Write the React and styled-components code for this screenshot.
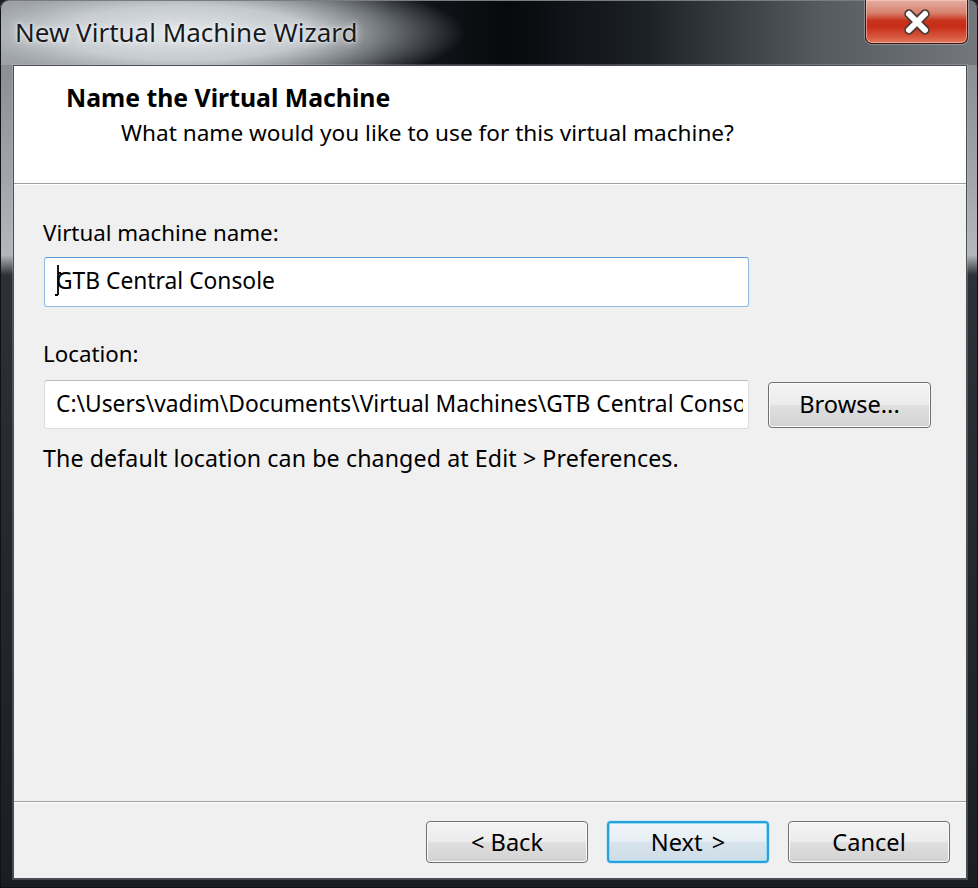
import React from "react";
import styled, { createGlobalStyle } from "styled-components";

const GlobalStyle = createGlobalStyle`
  html, body { margin: 0; padding: 0; background: #1b1f24; }
  * { box-sizing: border-box; }
`;

const FONT = `"Noto Sans", "Open Sans", "DejaVu Sans", sans-serif`;

const Window = styled.div`
  width: 978px;
  height: 888px;
  display: flex;
  flex-direction: column;
  padding: 0 11px 9px 13px;
  border-radius: 9px 9px 0 0;
  overflow: hidden;
  font-family: ${FONT};
  background:
    radial-gradient(ellipse 280px 60px at 185px 33px, rgba(228,232,236,0.97) 0%, rgba(205,210,215,0.92) 45%, rgba(165,170,175,0.55) 75%, rgba(150,155,160,0) 100%) 0 0 / 100% 65px no-repeat,
    linear-gradient(to right, #9a9ea2 0%, #6b7075 22%, #15191e 40%, #07090c 52%, #1c2126 66%, #565b60 84%, #74787c 100%) 0 0 / 100% 65px no-repeat,
    linear-gradient(to bottom, #7d8287 0%, #a2a6aa 180px, #b4b8bc 255px, #2c3137 275px, #1a1e23 100%);
  box-shadow: inset 0 1px 0 rgba(255,255,255,0.45), inset 0 0 0 1px #101215;
`;

const TitleBar = styled.div`
  height: 65px;
  flex: none;
  display: flex;
  align-items: flex-start;
  margin-right: -11px;
  padding-left: 2px;
`;

const Title = styled.div`
  align-self: center;
  margin-top: -1px;
  font-size: 26px;
  color: #161a1e;
  text-shadow: 0 0 8px rgba(255,255,255,0.9), 0 0 3px rgba(255,255,255,0.8);
`;

const CloseButton = styled.div`
  margin-left: auto;
  margin-right: 10px;
  width: 103px;
  height: 44px;
  display: flex;
  align-items: center;
  justify-content: center;
  border: 1px solid #3b1710;
  border-top: none;
  border-radius: 0 0 7px 7px;
  background: linear-gradient(to bottom, #e4ada1 0%, #d8826f 30%, #c8321c 48%, #c72d17 62%, #d6563d 85%, #e07a5e 100%);
  box-shadow: inset 0 0 0 1px rgba(255,210,200,0.55), 0 0 0 1px rgba(255,255,255,0.25);
`;

const Client = styled.div`
  flex: 1;
  display: flex;
  flex-direction: column;
  background: #f0f0f0;
  border: 1px solid #4a4f55;
  box-shadow: 0 0 0 1px rgba(200,205,210,0.25);
`;

const Header = styled.div`
  height: 118px;
  flex: none;
  background: #fff;
  padding: 16px 0 0 52px;
  border-bottom: 1px solid #a0a0a0;
  box-shadow: 0 1px 0 #ffffff;
`;

const HeaderTitle = styled.div`
  font-size: 24.8px;
  line-height: 30px;
  font-weight: 700;
  color: #000;
`;

const HeaderSub = styled.div`
  margin-top: 6px;
  padding-left: 55px;
  font-size: 22.6px;
  line-height: 30px;
  color: #000;
`;

const Body = styled.div`
  flex: 1;
  display: flex;
  flex-direction: column;
  align-items: flex-start;
  padding: 34px 0 0 29px;
`;

const Label = styled.div`
  font-size: 22.3px;
  line-height: 30px;
  color: #000;
  margin-top: ${(p) => p.$top || 0}px;
`;

const FieldRow = styled.div`
  display: flex;
  align-items: center;
  gap: 19px;
  margin-top: ${(p) => p.$top || 0}px;
`;

const Field = styled.div`
  position: relative;
  width: 705px;
  height: ${(p) => (p.$focused ? 50 : 49)}px;
  margin-left: 1px;
  padding: 0 5px 3px 11px;
  display: flex;
  align-items: center;
  overflow: hidden;
  white-space: nowrap;
  background: #fff;
  border: 1px solid ${(p) => (p.$focused ? "#8fbbe2" : "#dcdcdc")};
  border-top-color: ${(p) => (p.$focused ? "#5d9ad2" : "#bcbcbc")};
  border-radius: 3px;
  font-size: 22.8px;
  color: #000;
`;

const FieldText = styled.span`
  display: block;
  overflow: hidden;
  width: 100%;
`;

const IBeam = styled.svg`
  position: absolute;
  left: 8px;
  top: 5px;
`;

const Button = styled.div`
  width: ${(p) => p.$w || 162}px;
  height: ${(p) => p.$h || 42}px;
  display: flex;
  align-items: center;
  justify-content: center;
  padding-bottom: 1px;
  font-size: 23.6px;
  word-spacing: ${(p) => p.$ws || 0}px;
  color: #000;
  border-radius: 4px;
  border: ${(p) => (p.$default ? "2px solid #2f9fd8" : "1px solid #707070")};
  background: ${(p) =>
    p.$default
      ? "linear-gradient(to bottom, #f0f6fa 0%, #e6eef4 48%, #d6e3ec 52%, #cfdde8 100%)"
      : "linear-gradient(to bottom, #f4f4f4 0%, #ececec 48%, #dfdfdf 52%, #d2d2d2 100%)"};
  box-shadow: ${(p) =>
    p.$default
      ? "inset 0 0 0 1px #8fdcf7, 0 0 0 1px #c6ebf8"
      : "inset 0 0 0 1px #fcfcfc"};
`;

const Hint = styled.div`
  margin-top: 14px;
  font-size: 23.2px;
  line-height: 30px;
  letter-spacing: 0.1px;
  color: #000;
`;

const Footer = styled.div`
  flex: none;
  display: flex;
  justify-content: flex-end;
  gap: 19px;
  padding: 19px 16px 15px 0;
  border-top: 1px solid #a0a0a0;
  box-shadow: inset 0 1px 0 #ffffff;
`;

function CloseGlyph() {
  return (
    <svg width="30" height="26" viewBox="0 0 30 26">
      <path d="M7 5 L23 21 M23 5 L7 21" stroke="#4a3a38" strokeWidth="9.5" strokeLinecap="round" />
      <path d="M7 5 L23 21 M23 5 L7 21" stroke="#ffffff" strokeWidth="6" strokeLinecap="round" />
    </svg>
  );
}

export default function App() {
  return (
    <>
      <GlobalStyle />
      <Window>
        <TitleBar>
          <Title>New Virtual Machine Wizard</Title>
          <CloseButton>
            <CloseGlyph />
          </CloseButton>
        </TitleBar>
        <Client>
          <Header>
            <HeaderTitle>Name the Virtual Machine</HeaderTitle>
            <HeaderSub>What name would you like to use for this virtual machine?</HeaderSub>
          </Header>
          <Body>
            <Label>Virtual machine name:</Label>
            <FieldRow $top={9}>
              <Field $focused>
                <FieldText>GTB Central Console</FieldText>
                <IBeam width="10" height="34" viewBox="0 0 10 34">
                  <path d="M5 2 L5 32 M5 10 L8 10 M2 32 L5 32" stroke="#000" strokeWidth="1.8" fill="none" />
                </IBeam>
              </Field>
            </FieldRow>
            <Label $top={32}>Location:</Label>
            <FieldRow $top={11}>
              <Field>
                <FieldText>C:\Users\vadim\Documents\Virtual Machines\GTB Central Console</FieldText>
              </Field>
              <Button $w={163} $h={46}>Browse...</Button>
            </FieldRow>
            <Hint>The default location can be changed at Edit &gt; Preferences.</Hint>
          </Body>
          <Footer>
            <Button>&lt; Back</Button>
            <Button $default $ws={3}>Next &gt;</Button>
            <Button>Cancel</Button>
          </Footer>
        </Client>
      </Window>
    </>
  );
}
